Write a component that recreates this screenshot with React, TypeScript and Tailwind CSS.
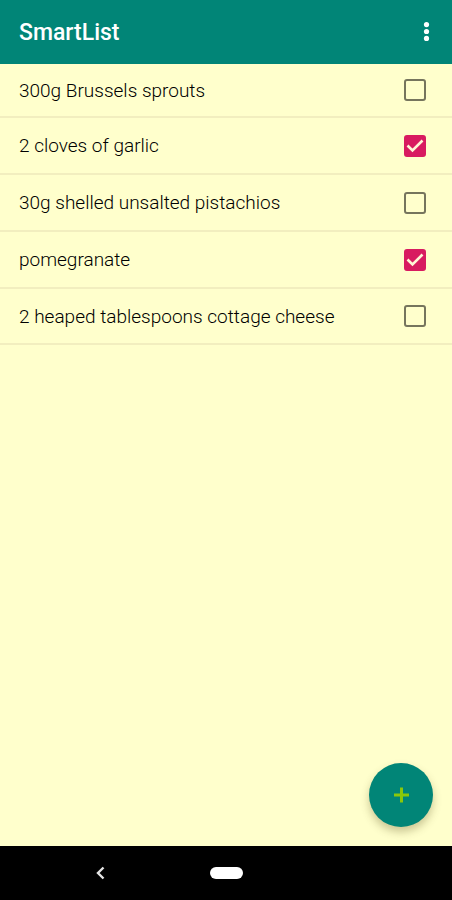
import { useState } from "react";

type Item = { id: string; name: string; done: boolean };

const initialItems: Item[] = [
  { id: "sprouts", name: "300g Brussels sprouts", done: false },
  { id: "garlic", name: "2 cloves of garlic", done: true },
  { id: "pistachios", name: "30g shelled unsalted pistachios", done: false },
  { id: "pomegranate", name: "pomegranate", done: true },
  { id: "cheese", name: "2 heaped tablespoons cottage cheese", done: false },
];

function ListRow({ item, onToggle }: { item: Item; onToggle: () => void }) {
  return (
    <li className="flex h-[57px] items-center border-b-2 border-[#f2eebf] pl-[19px] pr-[26px] first:h-[54px] last:h-14">
      <label htmlFor={item.id} className="flex-1 pt-px text-[19px] font-light leading-6 text-black">
        {item.name}
      </label>
      <span className="relative flex size-[22px]">
        <input
          id={item.id}
          type="checkbox"
          checked={item.done}
          onChange={onToggle}
          className="size-[22px] appearance-none rounded-[3px] border-2 border-[#76755d] checked:border-[#d81b60] checked:bg-[#d81b60]"
        />
        {item.done && (
          <svg viewBox="0 0 22 22" className="pointer-events-none absolute inset-0 size-[22px]" aria-hidden="true">
            <path d="M3.5 10.5 8.5 15.5 18.5 5.5" fill="none" stroke="#fff5d6" strokeWidth="2.6" />
          </svg>
        )}
      </span>
    </li>
  );
}

export default function App() {
  const [items, setItems] = useState(initialItems);
  const toggle = (id: string) =>
    setItems((all) => all.map((it) => (it.id === id ? { ...it, done: !it.done } : it)));

  return (
    <div className="flex min-h-screen flex-col bg-[#ffffcc] font-['Roboto',sans-serif]">
      <header className="flex h-16 items-center justify-between bg-[#018577] pl-[19px] pr-[22px]">
        <h1 className="pt-0.5 text-[23px] font-medium leading-7 text-white">SmartList</h1>
        <button type="button" aria-label="More options" className="flex h-8 w-2 items-center justify-center">
          <svg viewBox="0 0 8 20" className="h-5 w-2" fill="#ffffff" aria-hidden="true">
            <circle cx="4.5" cy="2.6" r="2.6" />
            <circle cx="4.5" cy="9.5" r="2.6" />
            <circle cx="4.5" cy="16.4" r="2.6" />
          </svg>
        </button>
      </header>

      <main className="flex flex-1 flex-col justify-between">
        <ul>
          {items.map((item) => (
            <ListRow key={item.id} item={item} onToggle={() => toggle(item.id)} />
          ))}
        </ul>
        <div className="flex justify-end pb-[19px] pr-[19px]">
          <button
            type="button"
            aria-label="Add item"
            className="flex size-16 items-center justify-center rounded-full bg-[#018577] shadow-[0_5px_8px_rgba(80,70,20,0.3)]"
          >
            <svg viewBox="0 0 16 16" className="size-4" aria-hidden="true">
              <path d="M8.5 .5v15M1 8h15" stroke="#8bc80a" strokeWidth="3" />
            </svg>
          </button>
        </div>
      </main>

      <nav className="grid h-[54px] grid-cols-[1fr_auto_1fr] items-center bg-black">
        <button type="button" aria-label="Back" className="ml-[94px] flex size-3 items-center justify-center">
          <svg viewBox="0 0 12 14" className="h-3.5 w-3 shrink-0" aria-hidden="true">
            <path d="M9.5 1.5 4 7l5.5 5.5" fill="none" stroke="#e4e4e4" strokeWidth="2.4" />
          </svg>
        </button>
        <button type="button" aria-label="Home" className="h-3 w-[33px] rounded-full bg-white" />
      </nav>
    </div>
  );
}
